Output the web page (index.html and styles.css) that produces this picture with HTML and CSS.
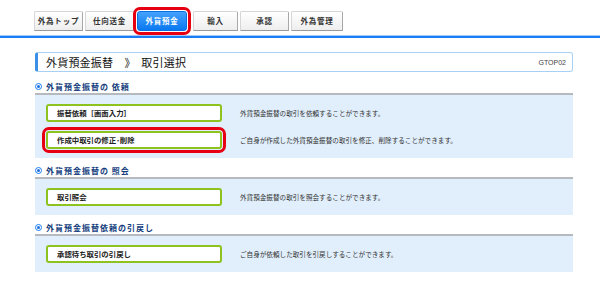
FILE: index.html
```html
<!DOCTYPE html>
<html lang="ja">
<head>
  <meta charset="UTF-8" />
  <title>外貨預金振替 取引選択</title>
  <link rel="stylesheet" href="styles.css">
</head>
<body>
  <header class="tab-bar">
    <ul class="tabs">
      <li class="tab">外為トップ</li>
      <li class="tab">仕向送金</li>
      <li class="tab tab-active mark">外貨預金</li>
      <li class="tab tab-narrow">輸入</li>
      <li class="tab">承認</li>
      <li class="tab tab-wide">外為管理</li>
    </ul>
  </header>

  <main class="content">
    <div class="page-title">
      <h1>外貨預金振替　》　取引選択</h1>
      <span class="page-id">GTOP02</span>
    </div>

    <!-- 依頼 -->
    <h2 class="section-head"><span class="dot"></span>外貨預金振替の 依頼</h2>
    <div class="section-box">
      <div class="row">
        <a class="menu-btn" href="#">振替依頼［画面入力］</a>
        <p class="desc">外貨預金振替の取引を依頼することができます。</p>
      </div>
      <div class="row">
        <a class="menu-btn mark" href="#">作成中取引の修正･削除</a>
        <p class="desc">ご自身が作成した外貨預金振替の取引を修正、削除することができます。</p>
      </div>
    </div>

    <!-- 照会 -->
    <h2 class="section-head"><span class="dot"></span>外貨預金振替の 照会</h2>
    <div class="section-box">
      <div class="row">
        <a class="menu-btn" href="#">取引照会</a>
        <p class="desc">外貨預金振替の取引を照会することができます。</p>
      </div>
    </div>

    <!-- 引戻し -->
    <h2 class="section-head"><span class="dot"></span>外貨預金振替依頼の引戻し</h2>
    <div class="section-box">
      <div class="row">
        <a class="menu-btn" href="#">承認待ち取引の引戻し</a>
        <p class="desc">ご自身が依頼した取引を引戻しすることができます。</p>
      </div>
    </div>
  </main>
</body>
</html>
```

FILE: styles.css
```css
/* Base */
* {
  box-sizing: border-box;
  margin: 0;
  padding: 0;
}

body {
  font-family: "Noto Sans CJK JP", "Noto Sans", sans-serif;
  background-color: #fff;
  color: #222;
}

/* Tabs */
.tab-bar {
  padding: 11px 0 5px 34px;
  border-bottom: 2px solid #1a7df5;
  box-shadow: 0 -1px 0 #9fcaf7 inset;
}

.tabs {
  list-style: none;
  display: flex;
  gap: 2px;
}

.tab {
  width: 49px;
  height: 20px;
  line-height: 18px;
  text-align: center;
  font-size: 7.5px;
  font-weight: bold;
  letter-spacing: 0.8px;
  color: #333;
  background: linear-gradient(#ffffff, #eeeeee);
  border: 1px solid #d6d6d6;
  border-right-color: #a8a8a8;
  border-bottom-color: #9a9a9a;
  border-radius: 2px 2px 0 0;
}

.tab-active {
  margin: 0 4px 0 1px;
  width: 50px;
  color: #fff;
  background: linear-gradient(#45a2ff, #0a78f0);
  border-color: #0a6fe0;
}

.tab-narrow {
  width: 45px;
}

.tab-wide {
  width: 52px;
}

/* Red highlight */
.mark {
  outline: 3px solid #e60012;
  outline-offset: 1px;
  border-radius: 3px;
}

/* Main */
.content {
  width: 538px;
  margin-left: 35px;
  padding-bottom: 14px;
}

.page-title {
  margin-top: 14px;
  height: 20px;
  display: flex;
  align-items: center;
  justify-content: space-between;
  padding: 0 6px 0 8px;
  border: 1px solid #a8d0f5;
  border-left: 3px solid #3c8fe6;
  border-radius: 3px;
}

.page-title h1 {
  font-size: 11px;
  font-weight: normal;
  letter-spacing: 0.2px;
  color: #111;
}

.page-id {
  font-family: "Liberation Sans", sans-serif;
  font-size: 7px;
  color: #444;
}

/* Sections */
.section-head {
  display: flex;
  align-items: center;
  margin-top: 7px;
  height: 14px;
  padding-bottom: 1px;
  border-bottom: 2px solid #b6b9bd;
  font-size: 8px;
  font-weight: bold;
  letter-spacing: 1px;
  color: #123c7c;
}

.page-title + .section-head {
  margin-top: 9px;
}

.dot {
  width: 7px;
  height: 7px;
  margin-right: 4px;
  border: 1px solid #1a7df5;
  border-radius: 50%;
  display: flex;
  align-items: center;
  justify-content: center;
}

.dot::after {
  content: "";
  width: 3px;
  height: 3px;
  border-radius: 50%;
  background-color: #1a6fe0;
}

.section-box {
  background-color: #e1effc;
  padding: 9px 0 9px 11px;
  display: flex;
  flex-direction: column;
  gap: 9px;
}

.row {
  display: flex;
  align-items: center;
}

.menu-btn {
  width: 176px;
  height: 18px;
  line-height: 14px;
  padding-left: 9px;
  background-color: #fff;
  border: 2px solid #8dc21f;
  border-radius: 3px;
  font-size: 7.4px;
  font-weight: bold;
  color: #222;
  text-decoration: none;
}

.desc {
  margin-left: 18px;
  font-size: 6.6px;
  color: #333;
}
```
